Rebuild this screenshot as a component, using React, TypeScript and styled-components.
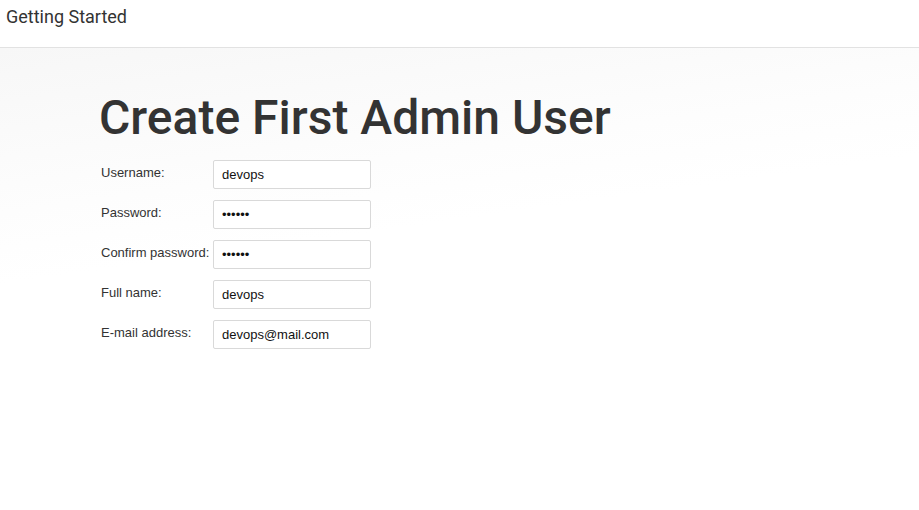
import React from "react";
import styled, { createGlobalStyle } from "styled-components";

const GlobalStyle = createGlobalStyle`
  html, body {
    margin: 0;
    padding: 0;
    background: #fff;
  }
  body {
    font-family: "Liberation Sans", Arial, sans-serif;
    color: #333;
  }
`;

const Page = styled.div`
  width: 919px;
  height: 510px;
  display: flex;
  flex-direction: column;
`;

const Header = styled.header`
  height: 48px;
  border-bottom: 1px solid #e2e2e2;
  display: flex;
  align-items: flex-start;
  padding: 5px 0 0 6px;
  box-sizing: border-box;
  flex-shrink: 0;
`;

const HeaderTitle = styled.h1`
  margin: 0;
  font-family: Roboto, "Liberation Sans", sans-serif;
  font-size: 18px;
  font-weight: 400;
  color: #333;
  line-height: 24px;
`;

const Main = styled.main`
  flex: 1;
  background: linear-gradient(172deg, #f7f7f7 0%, #fdfdfd 28%, #fff 40%);
  padding: 40px 0 0 99px;
`;

const Title = styled.h2`
  margin: 0 0 12px;
  font-family: Roboto, "Liberation Sans", sans-serif;
  font-size: 48px;
  font-weight: 500;
  line-height: 60px;
  color: #333;
`;

const Form = styled.form`
  display: grid;
  grid-template-columns: 112px 158px;
  row-gap: 11px;
  padding-left: 2px;
`;

const Label = styled.label`
  font-size: 13px;
  color: #333;
  padding-top: 5px;
  white-space: nowrap;
`;

const Input = styled.input`
  box-sizing: border-box;
  width: 158px;
  height: 29px;
  border: 1px solid #d9d9d9;
  border-radius: 2px;
  background: #fff;
  padding: 0 8px;
  font-family: "Liberation Sans", Arial, sans-serif;
  font-size: 13px;
  color: #111;
  outline: none;
`;

const fields = [
  { label: "Username:", type: "text", value: "devops" },
  { label: "Password:", type: "password", value: "devops" },
  { label: "Confirm password:", type: "password", value: "devops" },
  { label: "Full name:", type: "text", value: "devops" },
  { label: "E-mail address:", type: "text", value: "devops@mail.com" },
];

const App: React.FC = () => {
  return (
    <>
      <GlobalStyle />
      <Page>
        <Header>
          <HeaderTitle>Getting Started</HeaderTitle>
        </Header>
        <Main>
          <Title>Create First Admin User</Title>
          <Form onSubmit={(e) => e.preventDefault()}>
            {fields.map((f) => (
              <React.Fragment key={f.label}>
                <Label>{f.label}</Label>
                <Input type={f.type} defaultValue={f.value} readOnly />
              </React.Fragment>
            ))}
          </Form>
        </Main>
      </Page>
    </>
  );
};

export default App;
